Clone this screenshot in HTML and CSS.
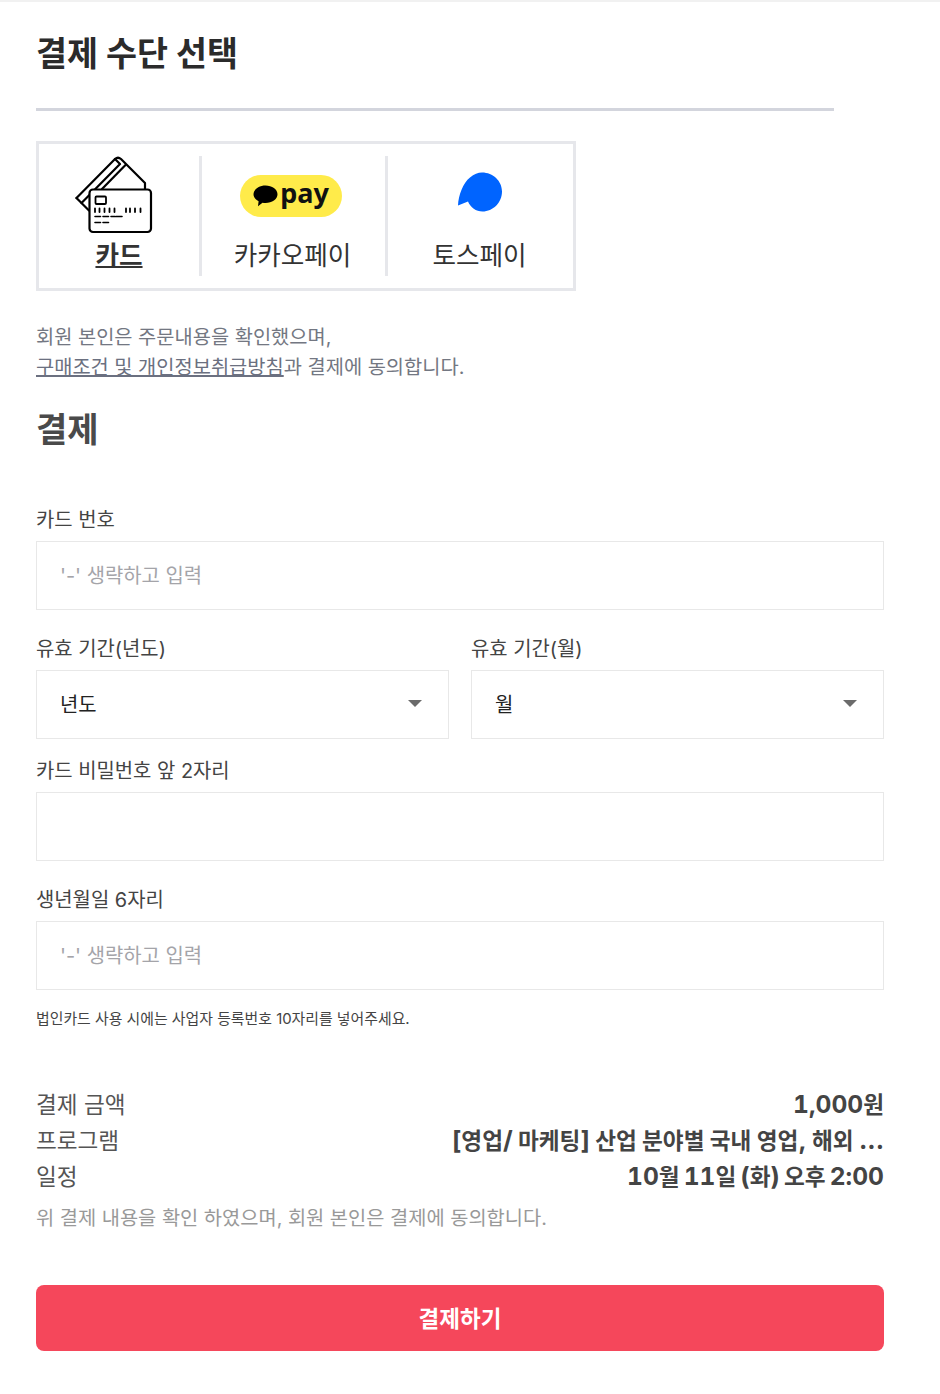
FILE: index.html
```html
<!DOCTYPE html>
<html lang="ko">
<head>
    <meta charset="UTF-8">
    <meta name="viewport" content="width=device-width, initial-scale=1.0">
    <title>결제 수단 선택</title>
    <link rel="stylesheet" href="styles.css">
</head>
<body>
    <div class="page">
        <h1 class="title">결제 수단 선택</h1>
        <div class="title-line"></div>

        <div class="pay-tabs">
            <div class="pay-tab pay-tab-card">
                <div class="pay-icon">
                    <svg class="card-icon" width="78" height="78" viewBox="0 0 78 78" fill="none" stroke="#000" stroke-width="2.200" stroke-linejoin="round" stroke-linecap="round">
                        <path d="M1.500 42 L40 3 Q43 0.500 46 3 L70 27 V33"/>
                        <path d="M1.500 42 L6.500 47 L45 8 L40 3"/>
                        <path d="M6.500 47 L14 54.500"/>
                        <path d="M27 33 L50.500 9"/>
                        <rect x="14.500" y="33.500" width="61.500" height="42.500" rx="3.500" fill="#fff"/>
                        <rect x="20.500" y="40.500" width="10.500" height="7.500" rx="1" stroke-width="1.800"/>
                        <path d="M20 52.500v3.500M24.500 52.500v3.500M29.500 52.500v3.500M34.500 52.500v3.500M39.500 52.500v3.500M51 52.500v3.500M55 52.500v3.500M60 52.500v3.500M65.500 52.500v3.500" stroke-width="1.800"/>
                        <path d="M20 60.500h5.500M28 60.500h5.500M36 60.500h4M41 60.500h6M20 66.500h5.500M28 66.500h5.500" stroke-width="1.600"/>
                    </svg>
                </div>
                <div class="pay-label pay-label-active">카드</div>
            </div>
            <div class="pay-tab pay-tab-kakao">
                <div class="pay-icon">
                    <div class="kakao-badge">
                        <svg class="kakao-bubble" width="25" height="22" viewBox="0 0 25 22">
                            <path d="M12.500 0.500C19 0.500 24.500 4.300 24.500 9.300C24.500 14.300 19 18 12.500 18C11.500 18 10.500 17.900 9.500 17.700L5 21.300L5.600 16.200C2.500 14.700 0.500 12.200 0.500 9.300C0.500 4.300 6 0.500 12.500 0.500Z" fill="#000"/>
                        </svg>
                        <span class="kakao-text">pay</span>
                    </div>
                </div>
                <div class="pay-label">카카오페이</div>
            </div>
            <div class="pay-tab pay-tab-toss">
                <div class="pay-icon">
                    <svg class="toss-mark" width="46" height="42" viewBox="0 0 46 42">
                        <path d="M1 34.500C1.500 24 6 12 13 6.500C17 3 21 1.500 25 1.500C36 1.500 45 10 45 20.500C45 31.500 36 40.500 25.500 40.500C19 40.500 13.500 36.500 11 30.500Z" fill="#0064ff"/>
                    </svg>
                </div>
                <div class="pay-label">토스페이</div>
            </div>
        </div>

        <p class="agree">회원 본인은 주문내용을 확인했으며,<br><a class="agree-link">구매조건 및 개인정보취급방침</a>과 결제에 동의합니다.</p>

        <h2 class="section-title">결제</h2>

        <div class="field field-card">
            <label class="field-label">카드 번호</label>
            <div class="input placeholder">'-' 생략하고 입력</div>
        </div>

        <div class="field-row">
            <div class="field">
                <label class="field-label">유효 기간(년도)</label>
                <div class="input select">년도<span class="caret"></span></div>
            </div>
            <div class="field">
                <label class="field-label">유효 기간(월)</label>
                <div class="input select">월<span class="caret"></span></div>
            </div>
        </div>

        <div class="field">
            <label class="field-label">카드 비밀번호 앞 2자리</label>
            <div class="input"></div>
        </div>

        <div class="field field-birth">
            <label class="field-label">생년월일 6자리</label>
            <div class="input placeholder">'-' 생략하고 입력</div>
        </div>
        <p class="hint">법인카드 사용 시에는 사업자 등록번호 10자리를 넣어주세요.</p>

        <div class="summary">
            <div class="summary-row"><span>결제 금액</span><strong><span class="num">1,000</span>원</strong></div>
            <div class="summary-row"><span>프로그램</span><strong><span class="latin">[</span>영업<span class="latin">/</span> 마케팅<span class="latin">]</span> 산업 분야별 국내 영업<span class="latin">,</span> 해외 <span class="latin">...</span></strong></div>
            <div class="summary-row summary-date"><span>일정</span><strong><span class="num">10</span>월 <span class="num">11</span>일 <span class="latin">(</span>화<span class="latin">)</span> 오후 <span class="num">2:00</span></strong></div>
        </div>
        <p class="confirm">위 결제 내용을 확인 하였으며, 회원 본인은 결제에 동의합니다.</p>

        <button class="pay-button">결제하기</button>
    </div>
</body>
</html>
```

FILE: styles.css
```css
/* General */
body {
    margin: 0;
    font-family: Inter, 'Noto Sans CJK KR', sans-serif;
    color: #333;
    background-color: #fff;
}

.page {
    box-sizing: border-box;
    height: 1394px;
    padding: 0 56px 0 36px;
    border-top: 2px solid #f1f1f1;
}

/* Title */
.title {
    margin: 0;
    padding-top: 30px;
    font-size: 33.700px;
    line-height: 44px;
    font-weight: 700;
    color: #2b2b2b;
}

.title-line {
    width: 798px;
    height: 3px;
    margin-top: 32px;
    background-color: #d3d5dd;
}

/* Payment tabs */
.pay-tabs {
    box-sizing: border-box;
    display: flex;
    width: 540px;
    height: 150px;
    margin-top: 30px;
    padding: 12px 0;
    border: 3px solid #e6e7eb;
}

.pay-tab {
    box-sizing: border-box;
    display: flex;
    flex-direction: column;
    align-items: center;
    border-right: 3px solid #e6e7eb;
}

.pay-tab-card {
    width: 163px;
}

.pay-tab-kakao {
    width: 186px;
    padding-right: 2px;
}

.pay-tab-toss {
    width: 185px;
    padding-right: 2px;
    border-right: 0;
}

.pay-icon {
    display: flex;
    justify-content: center;
    align-items: center;
    height: 78px;
}

.pay-label {
    margin-top: 4px;
    font-size: 25.600px;
    line-height: 36px;
    color: #333;
}

.pay-label-active {
    font-weight: 700;
    text-decoration: underline;
    text-decoration-thickness: 2px;
}

.card-icon {
    margin-right: 11px;
}

.kakao-badge {
    display: flex;
    align-items: center;
    justify-content: center;
    gap: 2px;
    width: 102px;
    height: 42px;
    margin: 2px 3px 0 0;
    border-radius: 21px;
    background-color: #ffeb4a;
}

.kakao-text {
    font-family: 'Noto Sans', sans-serif;
    font-size: 27px;
    line-height: 36px;
    font-weight: 700;
    color: #111;
    position: relative;
    top: -3px;
}

.toss-mark {
    margin-bottom: 6px;
}

/* Agreement */
.agree {
    margin: 31px 0 0;
    font-size: 19.800px;
    line-height: 30px;
    color: #737782;
}

.agree-link {
    color: #6b7080;
    text-decoration: underline;
    text-decoration-thickness: 2px;
}

.section-title {
    margin: 23px 0 0;
    font-size: 34px;
    line-height: 50px;
    font-weight: 700;
    color: #4a4a4a;
}

/* Form */
.field {
    flex: 1;
    margin-top: 14px;
}

.field-card {
    margin-top: 47px;
}

.field-birth {
    margin-top: 21px;
}

.field-row {
    display: flex;
    gap: 22px;
    margin-top: 21px;
}

.field-row .field {
    margin-top: 0;
}

.field-label {
    display: block;
    font-size: 19.900px;
    line-height: 36px;
    margin-bottom: 3px;
    color: #444;
}

.input {
    box-sizing: border-box;
    display: flex;
    align-items: center;
    justify-content: space-between;
    height: 69px;
    padding: 0 23px 2px;
    border: 1px solid #e8e8e8;
    font-size: 19.900px;
    color: #222;
}

.placeholder {
    color: #a4a4a9;
}

.select {
    padding-right: 26px;
}

.caret {
    width: 0;
    height: 0;
    border-left: 7.500px solid transparent;
    border-right: 7.500px solid transparent;
    border-top: 7.500px solid #6b6b6b;
}

.hint {
    margin: 19px 0 0;
    font-size: 14.900px;
    line-height: 20px;
    color: #444;
}

/* Summary */
.summary {
    margin-top: 58px;
}

.summary-row {
    display: flex;
    justify-content: space-between;
    height: 36px;
    font-size: 22.600px;
    line-height: 36px;
    color: #555;
}

.summary-row strong {
    margin-top: -1px;
    font-weight: 700;
    color: #444;
}

.summary-date strong {
    word-spacing: -1.300px;
}

.latin {
    font-size: 25px;
}

.num {
    font-size: 24.600px;
    font-variant-numeric: tabular-nums;
}

.confirm {
    margin: 8px 0 0;
    font-size: 19.800px;
    line-height: 30px;
    color: #999;
}

/* Button */
.pay-button {
    display: block;
    width: 100%;
    height: 66px;
    margin-top: 52px;
    padding: 0 0 2px;
    border: 0;
    border-radius: 8px;
    font-family: inherit;
    font-size: 22.500px;
    font-weight: 700;
    color: #fff;
    background-color: #f5475b;
}
```
